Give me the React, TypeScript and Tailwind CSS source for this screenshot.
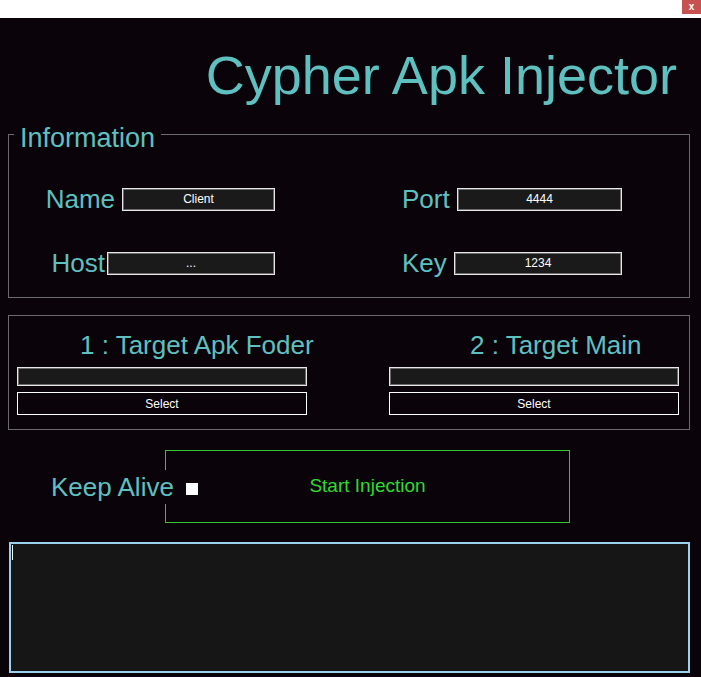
const TEAL = "text-[#5fc0c0]";

function Field({ value, width }: { value: string; width: string }) {
  return (
    <div
      className={`${width} h-[23px] bg-[#1a1a1a] border border-[#e8e8e8] shadow-[inset_0_0_0_1px_#6a6a6a] flex items-center justify-center text-[12px] text-white`}
    >
      {value}
    </div>
  );
}

function PathColumn({ title, pad }: { title: string; pad: string }) {
  return (
    <div className="w-[290px] flex flex-col">
      <div className={`${pad} mt-[16px] whitespace-nowrap text-[26px] leading-none ${TEAL}`}>{title}</div>
      <div className="mt-[9px] h-[19px] bg-[#1a1a1a] border border-[#e8e8e8] shadow-[inset_0_0_0_1px_#6a6a6a]" />
      <button className="mt-[6px] h-[23px] border border-white bg-[#0a030a] text-[12px] text-white">
        Select
      </button>
    </div>
  );
}

export default function App() {
  return (
    <div className="w-[701px] h-[677px] bg-[#0a030a] overflow-hidden font-['Liberation_Sans',Arial,sans-serif]">
      {/* title bar */}
      <div className="h-[18px] bg-white flex justify-end items-start">
        <div className="w-[19px] h-[14px] bg-[#c75050] text-white text-[10px] font-bold leading-none flex items-center justify-center">
          x
        </div>
      </div>

      <div className="h-[116px] pt-[30px] pr-[24px] text-right">
        <h1 className={`text-[54px] leading-none whitespace-nowrap ${TEAL}`}>Cypher Apk Injector</h1>
      </div>

      {/* Information */}
      <div className="relative ml-[8px] w-[682px] h-[164px] border border-[#6b6b6b]">
        <span className={`absolute left-[5px] top-[-10px] px-[6px] bg-[#0a030a] whitespace-nowrap text-[27px] leading-none ${TEAL}`}>
          Information
        </span>
        <div className="pt-[51px] flex flex-col gap-[38px]">
          <div className="flex">
            <div className="w-[266px] flex items-center justify-end">
              <span className={`mr-[7px] text-[26px] leading-none ${TEAL}`}>Name</span>
              <Field value="Client" width="w-[153px]" />
            </div>
            <div className="ml-[127px] w-[220px] flex items-center justify-between">
              <span className={`text-[26px] leading-none ${TEAL}`}>Port</span>
              <Field value="4444" width="w-[165px]" />
            </div>
          </div>
          <div className="flex">
            <div className="w-[266px] flex items-center justify-end">
              <span className={`mr-[2px] text-[26px] leading-none ${TEAL}`}>Host</span>
              <Field value="..." width="w-[168px]" />
            </div>
            <div className="ml-[127px] w-[220px] flex items-center justify-between">
              <span className={`text-[26px] leading-none ${TEAL}`}>Key</span>
              <Field value="1234" width="w-[168px]" />
            </div>
          </div>
        </div>
      </div>

      {/* Targets */}
      <div className="mt-[17px] ml-[8px] w-[682px] h-[115px] border border-[#6b6b6b] flex gap-[82px] pl-[8px]">
        <PathColumn title="1 : Target Apk Foder" pad="pl-[63px]" />
        <PathColumn title="2 : Target Main" pad="pl-[81px]" />
      </div>

      {/* Keep alive + start */}
      <div className="mt-[20px] flex items-center">
        <span className={`relative z-10 ml-[51px] mr-[-8px] w-[122px] shrink-0 py-[4px] bg-[#0a030a] whitespace-nowrap text-[26px] leading-[26px] ${TEAL}`}>
          Keep Alive
        </span>
        <div className="w-[405px] h-[73px] border border-[#34c434] flex items-center">
          <span className="ml-[20px] mt-[5px] w-[12px] h-[12px] bg-white shrink-0" />
          <span className="flex-1 mr-[32px] text-center text-[19px] text-[#2ddc2d]">Start Injection</span>
        </div>
      </div>

      {/* log */}
      <div className="mt-[19px] ml-[9px] w-[681px] h-[131px] bg-[#161616] border-2 border-[#9ad2ee] p-[1px]">
        <div className="w-[1px] h-[15px] bg-white" />
      </div>
    </div>
  );
}
